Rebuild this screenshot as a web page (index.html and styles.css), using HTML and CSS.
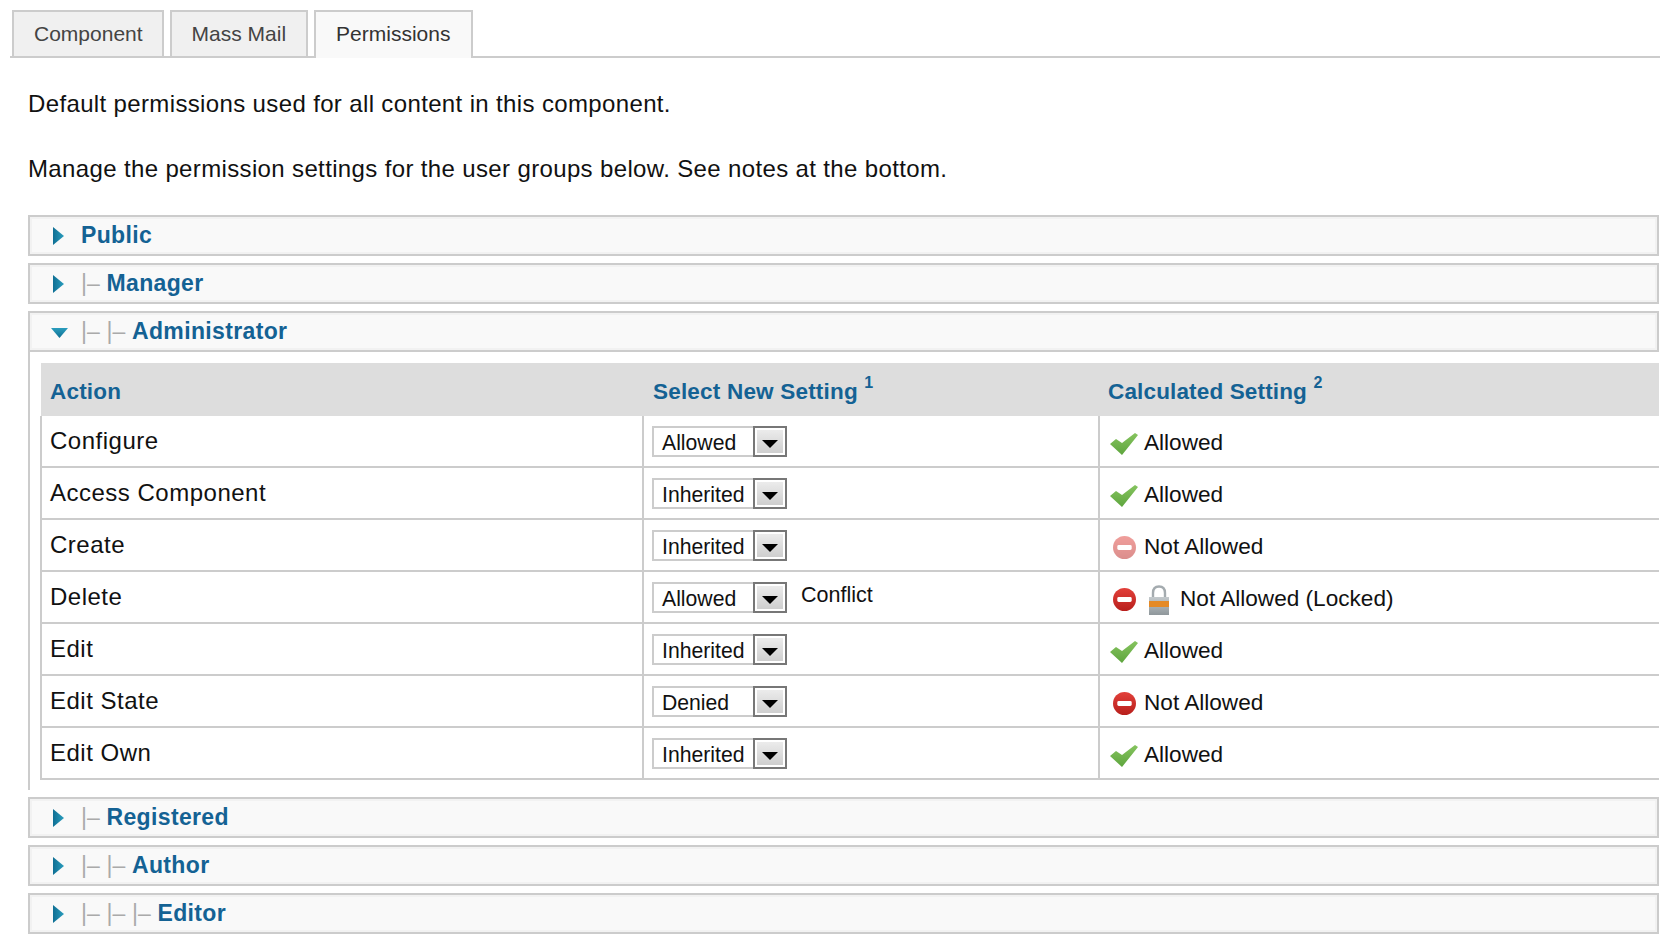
FILE: index.html
```html
<!DOCTYPE html>
<html lang="en">
<head>
    <meta charset="UTF-8">
    <meta name="viewport" content="width=device-width, initial-scale=1.0">
    <title>Permissions</title>
    <link rel="stylesheet" href="styles.css">
</head>
<body>
    <!-- Icons used by the rows -->
    <svg class="icon-defs" width="0" height="0" aria-hidden="true">
        <defs>
            <linearGradient id="arrowFill" x1="0" y1="0" x2="1" y2="0">
                <stop offset="0" stop-color="#0f6f94"/>
                <stop offset="1" stop-color="#2a9dbd"/>
            </linearGradient>
            <linearGradient id="arrowFillDown" x1="0" y1="0" x2="0" y2="1">
                <stop offset="0" stop-color="#2a9dbd"/>
                <stop offset="1" stop-color="#0f6f94"/>
            </linearGradient>
            <linearGradient id="checkFill" x1="0" y1="0" x2="0" y2="1">
                <stop offset="0" stop-color="#86c45f"/>
                <stop offset="1" stop-color="#5ea53e"/>
            </linearGradient>
            <linearGradient id="denyFill" x1="0" y1="0" x2="0" y2="1">
                <stop offset="0" stop-color="#e2403a"/>
                <stop offset="1" stop-color="#b81f1c"/>
            </linearGradient>
            <linearGradient id="lockBody" x1="0" y1="0" x2="0" y2="1">
                <stop offset="0" stop-color="#c3c9cc"/>
                <stop offset="1" stop-color="#8f979b"/>
            </linearGradient>
            <symbol id="arrowRight" viewBox="0 0 11 18"><polygon points="0,0 11,9 0,18" fill="url(#arrowFill)"/></symbol>
            <symbol id="arrowDown" viewBox="0 0 17 10"><polygon points="0,0 17,0 8.5,10" fill="url(#arrowFillDown)"/></symbol>
            <symbol id="check" viewBox="0 0 28 23"><path d="M0 12 L6 7 L12 11 L25 1 L28 3 L12 23 Z" fill="url(#checkFill)"/></symbol>
            <symbol id="deny" viewBox="0 0 24 24"><circle cx="12" cy="12" r="12" fill="url(#denyFill)"/><rect x="4.5" y="9.5" width="15" height="5" rx="1.5" fill="#fff"/></symbol>
            <symbol id="lock" viewBox="0 0 22 30">
                <path d="M5 13 V8 C5 3 8 1.5 11 1.5 C14 1.5 17 3 17 8 V13" fill="none" stroke="#a4abaf" stroke-width="2.4"/>
                <rect x="1" y="12" width="20" height="18" fill="url(#lockBody)"/>
                <rect x="1" y="16" width="20" height="6" fill="#e58a26"/>
            </symbol>
        </defs>
    </svg>

    <!-- Tabs -->
    <ul class="tabs">
        <li class="tab tab-first">Component</li>
        <li class="tab">Mass Mail</li>
        <li class="tab tab-active">Permissions</li>
    </ul>

    <div class="content">
        <p class="intro">Default permissions used for all content in this component.</p>
        <p class="intro">Manage the permission settings for the user groups below. See notes at the bottom.</p>

        <div class="group">
            <svg class="arrow-right"><use href="#arrowRight"/></svg>
            <a class="group-name">Public</a>
        </div>
        <div class="group">
            <svg class="arrow-right"><use href="#arrowRight"/></svg>
            <span class="level">|&ndash;</span><a class="group-name">Manager</a>
        </div>
        <div class="group">
            <svg class="arrow-down"><use href="#arrowDown"/></svg>
            <span class="level">|&ndash;</span><span class="level">|&ndash;</span><a class="group-name">Administrator</a>
        </div>

        <!-- Open group -->
        <div class="group-body">
            <table class="perm-table">
                <thead>
                    <tr>
                        <th class="col-action">Action</th>
                        <th class="col-select">Select New Setting <sup>1</sup></th>
                        <th class="col-calc">Calculated Setting <sup>2</sup></th>
                    </tr>
                </thead>
                <tbody>
                    <tr>
                        <td>Configure</td>
                        <td><div class="select-cell"><span class="select"><span class="select-value">Allowed</span><span class="select-btn"></span></span></div></td>
                        <td><span class="calc"><svg class="ico-check"><use href="#check"/></svg>Allowed</span></td>
                    </tr>
                    <tr>
                        <td>Access Component</td>
                        <td><div class="select-cell"><span class="select"><span class="select-value">Inherited</span><span class="select-btn"></span></span></div></td>
                        <td><span class="calc"><svg class="ico-check"><use href="#check"/></svg>Allowed</span></td>
                    </tr>
                    <tr>
                        <td>Create</td>
                        <td><div class="select-cell"><span class="select"><span class="select-value">Inherited</span><span class="select-btn"></span></span></div></td>
                        <td><span class="calc"><svg class="ico-deny faded"><use href="#deny"/></svg>Not Allowed</span></td>
                    </tr>
                    <tr>
                        <td>Delete</td>
                        <td><div class="select-cell"><span class="select"><span class="select-value">Allowed</span><span class="select-btn"></span></span><span class="conflict">Conflict</span></div></td>
                        <td><span class="calc"><svg class="ico-deny"><use href="#deny"/></svg><svg class="ico-lock"><use href="#lock"/></svg>Not Allowed (Locked)</span></td>
                    </tr>
                    <tr>
                        <td>Edit</td>
                        <td><div class="select-cell"><span class="select"><span class="select-value">Inherited</span><span class="select-btn"></span></span></div></td>
                        <td><span class="calc"><svg class="ico-check"><use href="#check"/></svg>Allowed</span></td>
                    </tr>
                    <tr>
                        <td>Edit State</td>
                        <td><div class="select-cell"><span class="select"><span class="select-value">Denied</span><span class="select-btn"></span></span></div></td>
                        <td><span class="calc"><svg class="ico-deny"><use href="#deny"/></svg>Not Allowed</span></td>
                    </tr>
                    <tr>
                        <td>Edit Own</td>
                        <td><div class="select-cell"><span class="select"><span class="select-value">Inherited</span><span class="select-btn"></span></span></div></td>
                        <td><span class="calc"><svg class="ico-check"><use href="#check"/></svg>Allowed</span></td>
                    </tr>
                </tbody>
            </table>
        </div>

        <div class="group">
            <svg class="arrow-right"><use href="#arrowRight"/></svg>
            <span class="level">|&ndash;</span><a class="group-name">Registered</a>
        </div>
        <div class="group">
            <svg class="arrow-right"><use href="#arrowRight"/></svg>
            <span class="level">|&ndash;</span><span class="level">|&ndash;</span><a class="group-name">Author</a>
        </div>
        <div class="group">
            <svg class="arrow-right"><use href="#arrowRight"/></svg>
            <span class="level">|&ndash;</span><span class="level">|&ndash;</span><span class="level">|&ndash;</span><a class="group-name">Editor</a>
        </div>
    </div>
</body>
</html>
```

FILE: styles.css
```css
/* General Styles */
body {
    font-family: "Liberation Sans", Arial, sans-serif;
    margin: 0;
    padding: 10px 0 0 0;
    background-color: #fff;
    color: #111;
    overflow: hidden;
}

.icon-defs {
    position: absolute;
}

/* Tabs */
.tabs {
    display: flex;
    gap: 6px;
    list-style: none;
    margin: 0 0 0 10px;
    padding: 0 0 0 2px;
    border-bottom: 2px solid #ccc;
    height: 46px;
}

.tab {
    height: 44px;
    padding: 0 20px;
    line-height: 44px;
    font-size: 21px;
    color: #444;
    background-color: #f0f0f0;
    border: 2px solid #ccc;
    border-bottom: none;
}

.tab-first {
    padding-right: 19px;
}

.tab-active {
    height: 46px;
    padding-right: 21px;
    background-color: #f9f9f9;
    color: #333;
}

/* Intro text */
.content {
    padding: 0 1px 0 28px;
}

.intro {
    margin: 0;
    font-size: 24px;
    line-height: 28px;
    letter-spacing: 0.36px;
    padding-top: 35px;
    padding-bottom: 2px;
}

.intro:first-child {
    padding-top: 32px;
}

.intro + .intro {
    padding-bottom: 32px;
}

/* Groups */
.group {
    display: flex;
    align-items: center;
    box-sizing: border-box;
    height: 41px;
    margin-bottom: 7px;
    padding-left: 21px;
    background-color: #f9f9f9;
    border: 2px solid #ccc;
    box-shadow: inset 0 0 0 2px #f2f2f2;
}

.arrow-right {
    flex: none;
    width: 11px;
    height: 18px;
    margin: 0 17px 0 2px;
}

.arrow-down {
    flex: none;
    width: 17px;
    height: 10px;
    margin: 2px 13px 0 0;
}

.level {
    width: 25.5px;
    flex: none;
    font-size: 23px;
    color: #aaa;
}

.group-name {
    font-size: 23px;
    font-weight: bold;
    letter-spacing: 0.35px;
    color: #146294;
}

/* Open group */
.group-body {
    margin-top: -7px;
    margin-bottom: 7px;
    padding: 11px 0 10px 10px;
    border-left: 2px solid #ccc;
}

.perm-table {
    width: 100%;
    border-collapse: collapse;
    table-layout: fixed;
}

.perm-table th {
    height: 53px;
    padding: 4px 0 0 9px;
    background-color: #ddd;
    color: #146294;
    font-size: 22.5px;
    letter-spacing: 0.2px;
    text-align: left;
    box-sizing: border-box;
}

.perm-table th sup {
    font-size: 16px;
    line-height: 0;
    vertical-align: 11px;
}

.perm-table .col-action {
    width: 602px;
}

.perm-table .col-select {
    width: 456px;
    padding-left: 10px;
}

.perm-table .col-calc {
    padding-left: 9px;
    letter-spacing: 0.15px;
}

.perm-table td {
    height: 50px;
    padding: 0 0 0 8px;
    border: 2px solid #ccc;
    border-right: none;
    border-top: none;
    font-size: 24px;
    letter-spacing: 0.5px;
}

.perm-table td:nth-child(3) {
    padding-left: 10px;
    letter-spacing: 0;
}

/* Fake select */
.select-cell {
    display: flex;
    align-items: center;
}

.select {
    display: flex;
    box-sizing: border-box;
    width: 135px;
    height: 31px;
    border: 2px solid #ccc;
    background-color: #fff;
}

.select-value {
    flex: 1;
    padding-left: 8px;
    font-size: 21.2px;
    line-height: 30px;
    letter-spacing: 0;
}

.select-btn {
    position: relative;
    box-sizing: border-box;
    width: 34px;
    height: 31px;
    margin: -2px -2px 0 0;
    border: 2px solid #777;
    box-shadow: inset 0 0 0 2px #fff;
    background: linear-gradient(#eee, #ccc);
}

.select-btn::after {
    content: "";
    position: absolute;
    left: 7px;
    top: 12px;
    border-left: 8px solid transparent;
    border-right: 8px solid transparent;
    border-top: 8px solid #000;
}

.conflict {
    margin: 0 0 4px 14px;
    font-size: 21.5px;
    letter-spacing: 0;
}

/* Calculated column */
.calc {
    display: flex;
    align-items: center;
    padding-top: 4px;
    font-size: 22.6px;
}

.ico-check {
    width: 28px;
    height: 23px;
    margin: 0 6px 0 0;
}

.ico-deny {
    width: 23px;
    height: 23px;
    margin: 0 8px 0 3px;
}

.ico-lock {
    width: 22px;
    height: 30px;
    margin: 2px 10px 0 4px;
}

.faded {
    opacity: 0.5;
}
```
